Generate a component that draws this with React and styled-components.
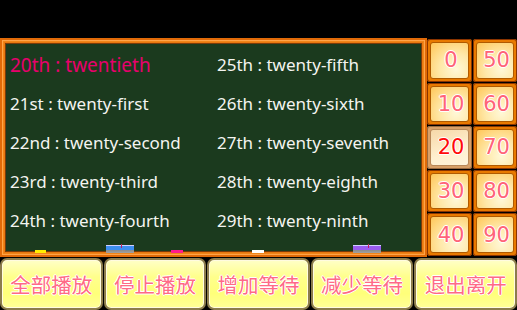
import React from 'react';
import styled, { createGlobalStyle } from 'styled-components';

const GlobalStyle = createGlobalStyle`
    html, body {
        margin: 0;
        padding: 0;
        background: #000;
    }
    body {
        width: 517px;
        height: 310px;
        overflow: hidden;
        font-family: "Noto Sans", "Open Sans", sans-serif;
    }
`;

const words = [
    ['20th : twentieth', '25th : twenty-fifth'],
    ['21st : twenty-first', '26th : twenty-sixth'],
    ['22nd : twenty-second', '27th : twenty-seventh'],
    ['23rd : twenty-third', '28th : twenty-eighth'],
    ['24th : twenty-fourth', '29th : twenty-ninth'],
];

const tiles = [
    ['0', '50'],
    ['10', '60'],
    ['20', '70'],
    ['30', '80'],
    ['40', '90'],
];

const buttons = ['全部播放', '停止播放', '增加等待', '减少等待', '退出离开'];

const App = () => {
    return (
        <Screen>
            <GlobalStyle />
            <TopBar />
            <Main>
                <Board>
                    <WordGrid>
                        {words.map((row, i) =>
                            row.map((w, j) => (
                                <Word key={`${i}-${j}`} active={i === 0 && j === 0}>
                                    {w}
                                </Word>
                            ))
                        )}
                    </WordGrid>
                    <Chalk color="#ffee00" style={{ left: 33, width: 11 }} />
                    <Eraser color="#3d8ef0" style={{ left: 104 }} />
                    <Chalk color="#ff1a8c" style={{ left: 169, width: 12 }} />
                    <Chalk color="#ffffff" style={{ left: 250, width: 12 }} />
                    <Eraser color="#9a5cf0" style={{ left: 351 }} />
                </Board>
                <TileGrid>
                    {tiles.map((row) =>
                        row.map((t) => (
                            <Tile key={t} selected={t === '20'}>
                                <TileInner selected={t === '20'}>{t}</TileInner>
                            </Tile>
                        ))
                    )}
                </TileGrid>
            </Main>
            <ButtonRow>
                {buttons.map((b) => (
                    <ActionButton key={b}>{b}</ActionButton>
                ))}
            </ButtonRow>
        </Screen>
    );
};

const Screen = styled.div`
    width: 517px;
    height: 310px;
    display: flex;
    flex-direction: column;
    background: #000;
`;

const TopBar = styled.div`
    height: 38px;
    flex-shrink: 0;
`;

const Main = styled.div`
    height: 219px;
    display: flex;
    flex-shrink: 0;
`;

const Board = styled.div`
    position: relative;
    width: 427px;
    box-sizing: border-box;
    background: #1b3a1e;
    border: 2px solid #e06a08;
    box-shadow:
        inset 0 0 0 1px #ffa448,
        inset 0 0 0 2px #f08418,
        inset 0 0 0 3px #e87810,
        inset 0 0 0 4px #7a3a08;
`;

const WordGrid = styled.div`
    display: grid;
    grid-template-columns: 207px 207px;
    grid-auto-rows: 39px;
    padding: 5px 0 0 8px;
`;

const Word = styled.div`
    display: flex;
    align-items: center;
    font-size: ${(p) => (p.active ? '19px' : '17px')};
    color: ${(p) => (p.active ? '#e8006c' : '#f4f4f0')};
    white-space: nowrap;
`;

const Chalk = styled.div`
    position: absolute;
    bottom: 2px;
    height: 3px;
    background: ${(p) => p.color};
`;

const Eraser = styled.div`
    position: absolute;
    bottom: 2px;
    width: 28px;
    height: 8px;
    box-sizing: border-box;
    background: linear-gradient(
        to bottom,
        ${(p) => p.color} 0%,
        ${(p) => p.color} 55%,
        #8a8a8a 55%,
        #a0a0a0 100%
    );
    border-top: 1px solid #d0d0ff;
    &::after {
        content: '';
        position: absolute;
        left: 15px;
        top: -2px;
        width: 1px;
        height: 4px;
        background: #c02060;
    }
`;

const TileGrid = styled.div`
    width: 90px;
    display: grid;
    grid-template-columns: 45px 44px;
    grid-template-rows: repeat(5, 1fr);
    column-gap: 1px;
    padding-top: 1px;
`;

const Tile = styled.div`
    margin: 0 0 1px;
    border-radius: 3px;
    padding: 3px;
    background: ${(p) => (p.selected ? '#d8a068' : '#e87a00')};
    box-shadow: inset 0 0 0 1px ${(p) => (p.selected ? '#9a6a40' : '#8a3400')};
    display: flex;
`;

const TileInner = styled.div`
    flex: 1;
    border-radius: 3px;
    border: 1px solid ${(p) => (p.selected ? '#b88858' : '#b05a00')};
    background: ${(p) =>
        p.selected
            ? 'linear-gradient(160deg, #f6d8a8 0%, #fff0d0 60%, #fff4dc 100%)'
            : 'radial-gradient(circle at 68% 75%, #fff8d8 0%, #ffe8a8 45%, #ffc658 100%)'};
    display: flex;
    align-items: center;
    justify-content: center;
    padding-left: 3px;
    font-family: "DejaVu Sans", "Noto Sans", sans-serif;
    font-size: 21px;
    color: ${(p) => (p.selected ? '#ff0a0a' : '#ff6478')};
    text-shadow:
        1px 0 0 #fff, -1px 0 0 #fff, 0 1px 0 #fff, 0 -1px 0 #fff;
`;

const ButtonRow = styled.div`
    flex: 1;
    display: grid;
    grid-template-columns: repeat(5, 1fr);
    gap: 1px;
    padding-top: 1px;
`;

const ActionButton = styled.div`
    border-radius: 7px;
    border: 2px solid #8c7c4c;
    box-shadow: inset 0 0 0 1px #fffbe0;
    background: linear-gradient(to bottom, #ffffc8 0%, #ffff8c 35%, #ffff7a 70%, #ffff98 100%);
    display: flex;
    align-items: center;
    justify-content: center;
    font-family: "Noto Sans CJK SC", sans-serif;
    font-size: 20.5px;
    color: #ff6a86;
    text-shadow:
        1px 0 0 #fff, -1px 0 0 #fff, 0 1px 0 #fff, 0 -1px 0 #fff;
`;

export default App;
